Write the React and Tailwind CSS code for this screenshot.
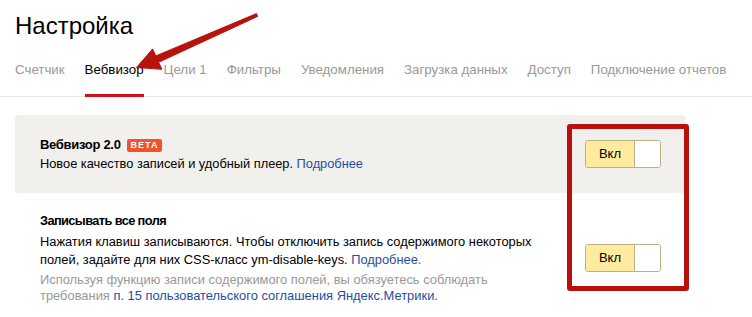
import React from "react";

const tabs = ["Счетчик", "Вебвизор", "Цели 1", "Фильтры", "Уведомления", "Загрузка данных", "Доступ", "Подключение отчетов"];

function Toggle() {
  return (
    <div className="flex h-[28px] w-[76px] shrink-0 overflow-hidden rounded-[3px] border border-[#bdb184]">
      <div className="flex w-[48px] items-center justify-center bg-[#ffeba0] text-[13px] text-black">Вкл</div>
      <div className="flex-1 border-l border-[#bdb184] bg-white" />
    </div>
  );
}

export default function App() {
  return (
    <div className="relative h-[317px] w-[752px] overflow-hidden bg-white font-['Liberation_Sans',Arial,sans-serif] text-black">
      <h1 className="pl-[15px] pt-[11px] text-[24px] leading-[30px] font-normal">Настройка</h1>
      <nav className="mt-[20px] flex gap-[20px] border-b border-[#e6e6e6] pl-[15px]">
        {tabs.map((t) =>
          t === "Вебвизор" ? (
            <div key={t} className="-mb-px border-b-[3px] border-[#d0101a] pb-[15px] text-[13.3px] leading-[18px] text-black">{t}</div>
          ) : (
            <div key={t} className="-mb-px pb-[18px] text-[13.3px] leading-[18px] text-[#999]">{t}</div>
          )
        )}
      </nav>

      <section className="ml-[15px] mt-[18px] flex h-[78px] w-[670px] items-center rounded-[3px] bg-[#f2f0ed] pl-[25px] pr-[24px]">
        <div className="flex-1">
          <div className="flex items-center text-[13px] font-bold leading-[20px] tracking-[-0.3px]">
            Вебвизор 2.0
            <span className="ml-[6px] rounded-[2px] bg-[#f0532b] px-[4px] text-[9px] font-bold leading-[13px] tracking-[1px] text-white">BETA</span>
          </div>
          <div className="text-[12.8px] leading-[18px]">
            Новое качество записей и удобный плеер. <span className="text-[#1f4fa3]">Подробнее</span>
          </div>
        </div>
        <Toggle />
      </section>

      <section className="ml-[15px] flex w-[670px] items-center pl-[25px] pr-[24px] pt-[18px]">
        <div className="flex-1">
          <div className="text-[12.8px] font-bold leading-[20px] tracking-[-0.6px]">Записывать все поля</div>
          <div className="mt-[2px] text-[12.85px] leading-[18px]">
            Нажатия клавиш записываются. Чтобы отключить запись содержимого некоторых
            <br />
            полей, задайте для них CSS-класс ym-disable-keys. <span className="text-[#1f4fa3]">Подробнее.</span>
          </div>
          <div className="mt-[3px] text-[12.9px] leading-[16px] text-[#999]">
            Используя функцию записи содержимого полей, вы обязуетесь соблюдать
            <br />
            требования <span className="text-[#1f4fa3]">п. 15 пользовательского соглашения Яндекс.Метрики.</span>
          </div>
        </div>
        <Toggle />
      </section>

      <div className="pointer-events-none absolute left-[567px] top-[124px] h-[167px] w-[122px] rounded-[3px] border-[5px] border-[#b8100b]" />

      <svg className="pointer-events-none absolute left-0 top-0" width="752" height="317" viewBox="0 0 752 317">
        <polygon
          points="256.4,13.6 155.8,55.9 152.6,48.9 136.5,67.5 162,69.3 158.6,62.3 257.6,16.4"
          fill="#b8120d"
          stroke="#b8120d"
          strokeWidth="1"
          strokeLinejoin="round"
        />
      </svg>
    </div>
  );
}
